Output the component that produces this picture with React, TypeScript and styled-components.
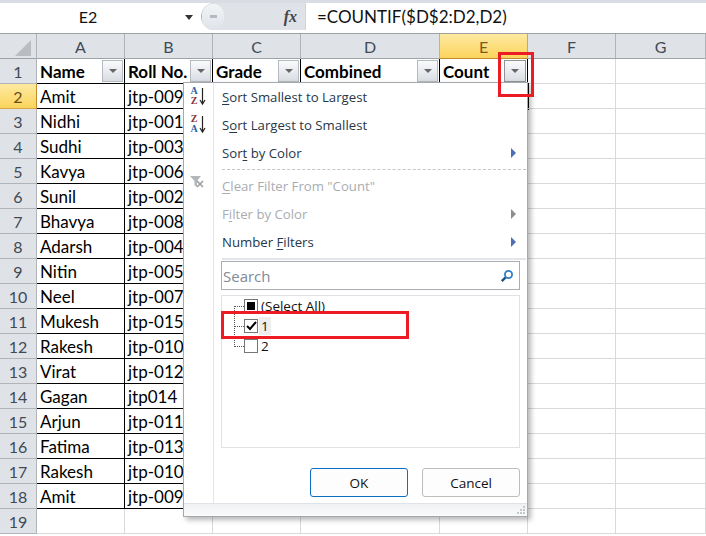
import React from 'react'
import styled, { createGlobalStyle } from 'styled-components'

const GlobalStyle = createGlobalStyle`
  html, body { margin: 0; padding: 0; background: #fff; }
  body { font-family: "Lato", "Liberation Sans", sans-serif; }
  * { box-sizing: border-box; }
`

const Page = styled.div`
  position: relative;
  width: 706px;
  height: 536px;
  overflow: hidden;
  background: #fff;
`

const FormulaBar = styled.div`
  display: flex;
  height: 34px;
  background: #fff;
  border-top: 3px solid #d9dde3;
  border-bottom: 1px solid #9fa3a8;
  padding: 0 0 3px;
`

const NameBox = styled.div`
  position: relative;
  width: 196px;
  display: flex;
  align-items: center;
  justify-content: center;
  padding-right: 20px;
  font-size: 16px;
  color: #111;
  background: #fff;
`

const NameArrow = styled.i`
  position: absolute;
  right: 3px;
  top: 12px;
  border-style: solid;
  border-width: 5px 4.5px 0;
  border-color: #333 transparent transparent;
`

const FxTrack = styled.div`
  width: 104px;
  margin-left: 5px;
  display: flex;
  align-items: center;
  justify-content: space-between;
  padding: 0 8px 0 0;
  background: #dfe3e8;
  border-radius: 14px 0 0 14px;
  border-left: 1px solid #b4b8bd;
`

const Knob = styled.div`
  width: 22px;
  height: 26px;
  border-radius: 13px;
  background: linear-gradient(#f2f4f6, #dfe3e8);
  display: flex;
  align-items: center;
  justify-content: center;
  &::after {
    content: '';
    width: 7px;
    height: 3px;
    background: #b5bac0;
  }
`

const Fx = styled.span`
  font-family: "Liberation Serif", serif;
  font-style: italic;
  font-weight: 700;
  font-size: 16px;
  color: #444;
`

const FormulaText = styled.div`
  flex: 1;
  display: flex;
  align-items: center;
  padding-left: 11px;
  font-size: 17px;
  color: #111;
  background: #fff;
  border-left: 1px solid #d0d3d7;
`

const Sheet = styled.div`
  display: grid;
  grid-template-columns: 37px 88px 88px 88px 139px 88px 88px 90px;
  grid-auto-rows: 25px;
`

const Corner = styled.div`
  position: relative;
  background: #dfe3e8;
  border-right: 1px solid #b0b4b9;
  border-bottom: 1px solid #9fa3a8;
  svg { position: absolute; left: 15px; top: 6px; }
`

const ColHead = styled.div<{ $active?: boolean }>`
  display: flex;
  align-items: center;
  justify-content: center;
  font-size: 16px;
  color: ${p => (p.$active ? '#7a5a20' : '#3f4a55')};
  background: ${p => (p.$active ? 'linear-gradient(#fde9a0, #fbd45c)' : '#dfe3e8')};
  border-right: 1px solid ${p => (p.$active ? '#d9a441' : '#b0b4b9')};
  border-bottom: 1px solid ${p => (p.$active ? '#c28a2c' : '#9fa3a8')};
`

const RowHead = styled.div<{ $active?: boolean }>`
  display: flex;
  align-items: center;
  justify-content: center;
  font-size: 16px;
  color: ${p => (p.$active ? '#6b4e16' : '#3f4a55')};
  background: ${p => (p.$active ? 'linear-gradient(#fde9a0, #fbd45c)' : '#dfe3e8')};
  border-right: 1px solid ${p => (p.$active ? '#c28a2c' : '#b0b4b9')};
  border-bottom: 1px solid ${p => (p.$active ? '#d9a441' : '#b0b4b9')};
`

const Cell = styled.div<{ $boxed?: boolean; $bold?: boolean }>`
  position: relative;
  display: flex;
  align-items: center;
  padding-left: 3px;
  font-size: 17px;
  font-weight: ${p => (p.$bold ? 700 : 400)};
  color: #000;
  white-space: nowrap;
  overflow: hidden;
  border-right: 1px solid ${p => (p.$boxed ? '#000' : '#d9d9d9')};
  border-bottom: 1px solid ${p => (p.$boxed ? '#000' : '#d9d9d9')};
`

const Selected = styled.div`
  position: relative;
  border-right: 1px solid #d9d9d9;
  border-bottom: 1px solid #d9d9d9;
  &::after {
    content: '';
    position: absolute;
    right: -2px;
    top: -1px;
    bottom: -2px;
    width: 3px;
    background: #000;
  }
`

const FilterButton = styled.span<{ $active?: boolean }>`
  position: absolute;
  right: 1px;
  top: 1px;
  width: ${p => (p.$active ? '22px' : '21px')};
  height: 22px;
  display: flex;
  align-items: center;
  justify-content: center;
  background: linear-gradient(#fafbfc, #d9dde3);
  border: 1px solid ${p => (p.$active ? '#8f949a' : '#b5bac0')};
  &::after {
    content: '';
    border-style: solid;
    border-width: 4px 4px 0;
    border-color: #666 transparent transparent;
  }
`

const Menu = styled.div`
  position: absolute;
  left: 183px;
  top: 82px;
  width: 345px;
  height: 435px;
  display: flex;
  flex-direction: column;
  background: #fff;
  border: 1px solid #a5a8ad;
  box-shadow: 3px 3px 5px rgba(0, 0, 0, 0.28);
  font-family: "Open Sans", "Liberation Sans", sans-serif;
  font-size: 13.2px;
  color: #26374a;
`

const MenuBody = styled.div`
  flex: 1;
  display: flex;
  flex-direction: column;
  background: linear-gradient(to right, #fff 29px, #e3e5e8 29px, #e3e5e8 30px, #fff 30px);
`

const Item = styled.div<{ $disabled?: boolean }>`
  position: relative;
  height: 28px;
  flex: none;
  display: flex;
  align-items: center;
  padding: 0 11px 0 38px;
  color: ${p => (p.$disabled ? '#a9adb2' : '#26374a')};
  u { text-underline-offset: 2px; }
`

const ItemIcon = styled.span`
  position: absolute;
  left: 5px;
  top: 3px;
  display: flex;
  align-items: center;
`

const SortLetters = styled.span`
  display: flex;
  flex-direction: column;
  width: 10px;
  font-family: "Liberation Serif", serif;
  font-weight: 700;
  font-size: 10px;
  line-height: 10px;
  text-align: center;
`

const Letter = styled.span<{ $color: string }>`
  color: ${p => p.$color};
`

const Caret = styled.i<{ $disabled?: boolean }>`
  margin-left: auto;
  border-style: solid;
  border-width: 5px 0 5px 5px;
  border-color: transparent transparent transparent ${p => (p.$disabled ? '#8d8d8d' : '#4e6fb5')};
`

const DottedRule = styled.div`
  height: 0;
  flex: none;
  margin: 2px 1px 2px 38px;
  border-top: 1px dashed #c4c6c9;
`

const SolidRule = styled.div`
  height: 2px;
  flex: none;
  margin: 2px 1px 1px 38px;
  background: #e3e5e8;
`

const SearchBox = styled.div`
  height: 29px;
  flex: none;
  margin: 0 7px 0 37px;
  display: flex;
  align-items: center;
  justify-content: space-between;
  padding: 0 5px 0 1px;
  border: 1px solid #a9adb2;
  font-size: 15px;
  color: #7f8a96;
`

const ListBox = styled.div`
  position: relative;
  height: 153px;
  flex: none;
  margin: 5px 7px 0 37px;
  padding: 0 0 0 22px;
  border: 1px solid #e0e2e5;
`

const TreeLine = styled.i`
  position: absolute;
  left: 12px;
  top: 10px;
  height: 41px;
  border-left: 1px dotted #555;
`

const TreeRow = styled.div`
  position: relative;
  height: 20px;
  display: flex;
  align-items: center;
  gap: 1px;
  font-size: 13.5px;
  color: #111;
  &::before {
    content: '';
    position: absolute;
    left: -10px;
    top: 10px;
    width: 10px;
    border-top: 1px dotted #555;
  }
`

const Check = styled.span`
  width: 14px;
  height: 14px;
  display: flex;
  align-items: center;
  justify-content: center;
  background: #fff;
  border: 1px solid #777;
`

const MixedMark = styled.i`
  width: 8px;
  height: 8px;
  background: #000;
`

const ValueLabel = styled.span<{ $hover?: boolean }>`
  padding: 0 2px;
  background: ${p => (p.$hover ? '#eeeeee' : 'transparent')};
`

const ButtonRow = styled.div`
  display: flex;
  justify-content: flex-end;
  gap: 14px;
  margin: 20px 7px 0 0;
`

const DialogButton = styled.div<{ $primary?: boolean }>`
  width: 98px;
  height: 29px;
  display: flex;
  align-items: center;
  justify-content: center;
  font-size: 13.5px;
  color: #111;
  background: #fdfdfd;
  border-radius: 3px;
  border: 1px solid ${p => (p.$primary ? '#0a6fc2' : '#bdbdbd')};
`

const MenuFooter = styled.div`
  position: relative;
  height: 13px;
  flex: none;
  background: linear-gradient(#eff1f3, #fafbfb);
  border-top: 1px solid #dfe3e8;
`

const Grip = styled.svg`
  position: absolute;
  right: 1px;
  bottom: 1px;
`

const RedBox = styled.div`
  position: absolute;
  border: 3px solid #ed1c24;
  pointer-events: none;
`

const CountBox = styled(RedBox)`
  left: 498px;
  top: 52px;
  width: 36px;
  height: 45px;
`

const ValueBox = styled(RedBox)`
  left: 221px;
  top: 311px;
  width: 188px;
  height: 28px;
`

const people: [string, string][] = [
  ['Amit', 'jtp-009'],
  ['Nidhi', 'jtp-001'],
  ['Sudhi', 'jtp-003'],
  ['Kavya', 'jtp-006'],
  ['Sunil', 'jtp-002'],
  ['Bhavya', 'jtp-008'],
  ['Adarsh', 'jtp-004'],
  ['Nitin', 'jtp-005'],
  ['Neel', 'jtp-007'],
  ['Mukesh', 'jtp-015'],
  ['Rakesh', 'jtp-010'],
  ['Virat', 'jtp-012'],
  ['Gagan', 'jtp014'],
  ['Arjun', 'jtp-011'],
  ['Fatima', 'jtp-013'],
  ['Rakesh', 'jtp-010'],
  ['Amit', 'jtp-009'],
]

const columns = ['A', 'B', 'C', 'D', 'E', 'F', 'G']
const headers = ['Name', 'Roll No.', 'Grade', 'Combined', 'Count']

const SortArrow = () => (
  <svg width="7" height="19" viewBox="0 0 7 19">
    <path d="M3.5 1v15M1 13l2.5 4 2.5-4" fill="none" stroke="#222" strokeWidth="1.2" />
  </svg>
)

const App = () => (
  <Page>
    <GlobalStyle />
    <FormulaBar>
      <NameBox>
        E2
        <NameArrow />
      </NameBox>
      <FxTrack>
        <Knob />
        <Fx>fx</Fx>
      </FxTrack>
      <FormulaText>=COUNTIF($D$2:D2,D2)</FormulaText>
    </FormulaBar>
    <Sheet>
      <Corner>
        <svg width="16" height="16" viewBox="0 0 16 16">
          <path d="M16 0v16H0z" fill="#b9bdc2" />
        </svg>
      </Corner>
      {columns.map(c => (
        <ColHead key={c} $active={c === 'E'}>
          {c}
        </ColHead>
      ))}

      <RowHead>1</RowHead>
      {columns.map((c, i) =>
        headers[i] ? (
          <Cell key={c} $boxed $bold>
            {headers[i]}
            <FilterButton $active={c === 'E'} />
          </Cell>
        ) : (
          <Cell key={c} />
        ),
      )}

      {Array.from({ length: 18 }, (_, r) => {
        const person = people[r]
        return (
          <React.Fragment key={r}>
            <RowHead $active={r === 0}>{r + 2}</RowHead>
            {columns.map((c, i) => {
              if (r === 0 && c === 'E') return <Selected key={c} />
              return (
                <Cell key={c} $boxed={!!person && i < 5}>
                  {person && i < 2 ? person[i] : ''}
                </Cell>
              )
            })}
          </React.Fragment>
        )
      })}
    </Sheet>

    <Menu>
      <MenuBody>
        <Item>
          <ItemIcon>
            <SortLetters>
              <Letter $color="#2b5fa8">A</Letter>
              <Letter $color="#8a2f3a">Z</Letter>
            </SortLetters>
            <SortArrow />
          </ItemIcon>
          <span>
            <u>S</u>ort Smallest to Largest
          </span>
        </Item>
        <Item>
          <ItemIcon>
            <SortLetters>
              <Letter $color="#8a2f3a">Z</Letter>
              <Letter $color="#2b5fa8">A</Letter>
            </SortLetters>
            <SortArrow />
          </ItemIcon>
          <span>
            S<u>o</u>rt Largest to Smallest
          </span>
        </Item>
        <Item>
          <span>
            Sor<u>t</u> by Color
          </span>
          <Caret />
        </Item>
        <DottedRule />
        <Item $disabled>
          <ItemIcon>
            <svg width="16" height="16" viewBox="0 0 16 16">
              <path d="M1 1h11L8 6v6L5.5 10.5V6z" fill="#b4b7ba" />
              <path d="M8 6l6 6M14 6l-6 6" stroke="#9a9da1" strokeWidth="1.6" />
            </svg>
          </ItemIcon>
          <span>
            <u>C</u>lear Filter From "Count"
          </span>
        </Item>
        <Item $disabled>
          <span>
            F<u>i</u>lter by Color
          </span>
          <Caret $disabled />
        </Item>
        <Item>
          <span>
            Number <u>F</u>ilters
          </span>
          <Caret />
        </Item>
        <SolidRule />
        <SearchBox>
          Search
          <svg width="14" height="14" viewBox="0 0 14 14">
            <circle cx="8.5" cy="5.5" r="3.6" fill="#fff" stroke="#2f7fc4" strokeWidth="1.8" />
            <path d="M5.5 8.5L1.8 12.2" stroke="#1c4f86" strokeWidth="2.4" />
          </svg>
        </SearchBox>
        <ListBox>
          <TreeLine />
          <TreeRow>
            <Check>
              <MixedMark />
            </Check>
            <ValueLabel>(Select All)</ValueLabel>
          </TreeRow>
          <TreeRow>
            <Check>
              <svg width="11" height="10" viewBox="0 0 11 10">
                <path d="M1 5l3 3 6-7" fill="none" stroke="#000" strokeWidth="2" />
              </svg>
            </Check>
            <ValueLabel $hover>1</ValueLabel>
          </TreeRow>
          <TreeRow>
            <Check />
            <ValueLabel>2</ValueLabel>
          </TreeRow>
        </ListBox>
        <ButtonRow>
          <DialogButton $primary>OK</DialogButton>
          <DialogButton>Cancel</DialogButton>
        </ButtonRow>
      </MenuBody>
      <MenuFooter>
        <Grip width="10" height="10" viewBox="0 0 10 10">
          <path d="M7 1h2v2H7zM7 4h2v2H7zM4 4h2v2H4zM7 7h2v2H7zM4 7h2v2H4zM1 7h2v2H1z" fill="#c4c7cb" />
        </Grip>
      </MenuFooter>
    </Menu>

    <CountBox />
    <ValueBox />
  </Page>
)

export default App
